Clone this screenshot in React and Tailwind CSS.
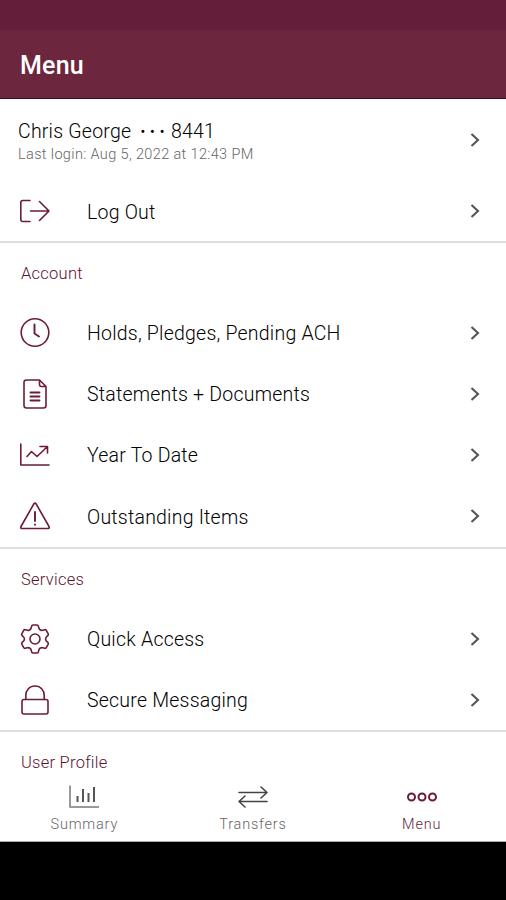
const MAROON = 'text-[#6b1d38]'

function Icon({ children, className = MAROON }) {
  return (
    <svg
      width="32"
      height="32"
      viewBox="0 0 32 32"
      fill="none"
      stroke="currentColor"
      strokeWidth="1.6"
      strokeLinecap="round"
      strokeLinejoin="round"
      className={`shrink-0 ${className}`}
    >
      {children}
    </svg>
  )
}

const LogOutIcon = () => (
  <Icon>
    <path d="M11 5.5H3.8Q1.8 5.5 1.8 7.5V24.5Q1.8 26.5 3.8 26.5H11" />
    <path d="M11.5 16H30M20.5 6.5L30 16L20.5 25.5" />
  </Icon>
)

const ClockIcon = () => (
  <Icon>
    <circle cx="16" cy="15.5" r="13.8" />
    <path d="M15.5 7.5V16.5L20 19.5" strokeWidth="1.9" />
  </Icon>
)

const DocumentIcon = () => (
  <Icon>
    <path d="M20.5 2H7.5Q5 2 5 4.5V27.5Q5 30 7.5 30H24.5Q27 30 27 27.5V8.5L20.5 2V6.5Q20.5 8.5 22.5 8.5H27" />
    <path d="M11.5 14.5H20.5M11.5 18.5H20.5M11.5 22.5H20.5" strokeWidth="1.9" />
  </Icon>
)

const TrendIcon = () => (
  <Icon>
    <path d="M1.8 5V26H30" />
    <path d="M8 17.5L12.5 12.5L18 17.5L28 8M21 7.5H28.5V14" />
  </Icon>
)

const WarningIcon = () => (
  <Icon>
    <path d="M14.8 4Q16 2.2 17.2 4L30 26.5Q30.8 28.5 28.8 28.5H3.2Q1.2 28.5 2 26.5Z" />
    <path d="M16 12V21M16 24.5V24.7" strokeWidth="1.9" />
  </Icon>
)

const GearIcon = () => (
  <Icon>
    <path d="M14 2H18Q19 2 19.3 3L20 5.4Q20.4 6.4 21.5 7Q22.6 7.6 23.7 7.3L25.8 6.7Q26.8 6.5 27.3 7.4L29.2 10.8Q29.7 11.7 29 12.4L27.4 14Q26.6 14.8 26.6 16Q26.6 17.2 27.4 18L29 19.6Q29.7 20.3 29.2 21.2L27.3 24.6Q26.8 25.5 25.8 25.3L23.7 24.7Q22.6 24.4 21.5 25Q20.4 25.6 20 26.6L19.3 29Q19 30 18 30H14Q13 30 12.7 29L12 26.6Q11.6 25.6 10.5 25Q9.4 24.4 8.3 24.7L6.2 25.3Q5.2 25.5 4.7 24.6L2.8 21.2Q2.3 20.3 3 19.6L4.6 18Q5.4 17.2 5.4 16Q5.4 14.8 4.6 14L3 12.4Q2.3 11.7 2.8 10.8L4.7 7.4Q5.2 6.5 6.2 6.7L8.3 7.3Q9.4 7.6 10.5 7Q11.6 6.4 12 5.4L12.7 3Q13 2 14 2Z" />
    <circle cx="16" cy="16" r="5" />
  </Icon>
)

const LockIcon = () => (
  <Icon>
    <path d="M6.8 15.5V11.5C6.8 6 10.5 2 16 2S25.2 6 25.2 11.5V15.5" />
    <rect x="3" y="15.5" width="26" height="14.5" rx="2" />
  </Icon>
)

const SummaryIcon = () => (
  <Icon className="text-[#555]">
    <path d="M2 4.5V26H31" stroke="#999" strokeWidth="2" strokeLinecap="butt" />
    <path d="M9.5 15V21M15 8V21M20.5 12V21M26 6V21" strokeWidth="2" strokeLinecap="butt" />
  </Icon>
)

const TransfersIcon = () => (
  <Icon className="text-[#444]">
    <path d="M2 11.5H30M24 6L30 11.5L24 17" />
    <path d="M30 20.5H2M8 15L2 20.5L8 26" />
  </Icon>
)

const DotsIcon = () => (
  <Icon>
    <circle cx="5.5" cy="16" r="3.5" strokeWidth="2" />
    <circle cx="16" cy="16" r="3.5" strokeWidth="2" />
    <circle cx="26.5" cy="16" r="3.5" strokeWidth="2" />
  </Icon>
)

function Chevron() {
  return (
    <svg width="10" height="16" viewBox="0 0 10 16" fill="none" stroke="#555" strokeWidth="2.1" className="shrink-0">
      <path d="M1.5 2L8 8L1.5 14" />
    </svg>
  )
}

const SECTIONS = [
  {
    title: 'Account',
    items: [
      { icon: ClockIcon, label: 'Holds, Pledges, Pending ACH' },
      { icon: DocumentIcon, label: 'Statements + Documents' },
      { icon: TrendIcon, label: 'Year To Date' },
      { icon: WarningIcon, label: 'Outstanding Items', height: 'h-[62px]' },
    ],
  },
  {
    title: 'Services',
    items: [
      { icon: GearIcon, label: 'Quick Access' },
      { icon: LockIcon, label: 'Secure Messaging' },
    ],
  },
]

const TABS = [
  { icon: SummaryIcon, label: 'Summary', color: 'text-[#666]' },
  { icon: TransfersIcon, label: 'Transfers', color: 'text-[#666]' },
  { icon: DotsIcon, label: 'Menu', color: 'text-[#641e3a]' },
]

function MenuRow({ icon: RowIcon, label, height = 'h-[61px]' }) {
  return (
    <div className={`flex items-center pl-[19px] pr-[26px] ${height}`}>
      <RowIcon />
      <span className="ml-9 flex-1 pt-[3px] text-[19.5px] font-light tracking-[0.22px] text-black">{label}</span>
      <Chevron />
    </div>
  )
}

function SectionTitle({ children }) {
  return (
    <div className="flex h-[59px] items-center pl-[21px] pt-[3px] text-[16.5px] font-light tracking-[0.25px] text-[#5a1230]">
      {children}
    </div>
  )
}

export default function App() {
  return (
    <div className="flex h-[900px] w-[506px] flex-col overflow-hidden bg-white font-['Roboto',sans-serif]">
      {/* Status bar + header */}
      <div className="h-[30px] shrink-0 bg-[#641e3a]" />
      <header className="flex h-[69px] shrink-0 items-center border-b border-[#4a0a1c] bg-[#6c263e] pl-5 pt-1">
        <h1 className="text-[25px] font-medium tracking-[0.2px] text-white">Menu</h1>
      </header>

      <main className="min-h-0 flex-1 overflow-hidden">
        <div className="border-b-2 border-[#dedede]">
          <div className="flex h-[82px] items-center pl-[18px] pr-[26px]">
            <div className="flex-1 pt-1.5">
              <p className="flex items-center text-[19.5px] font-light leading-6 tracking-[0.22px] text-black">
                Chris George
                <span className="ml-[9px] mr-0.5 text-[16px] tracking-[4.4px]">•••</span>
                8441
              </p>
              <p className="text-[14.5px] font-light leading-[22px] tracking-[0.36px] text-[#666]">
                Last login: Aug 5, 2022 at 12:43 PM
              </p>
            </div>
            <Chevron />
          </div>
          <MenuRow icon={LogOutIcon} label="Log Out" height="h-[60px]" />
        </div>

        {SECTIONS.map(({ title, items }) => (
          <section key={title} className="border-b-2 border-[#dedede]">
            <SectionTitle>{title}</SectionTitle>
            {items.map((item) => (
              <MenuRow key={item.label} {...item} />
            ))}
          </section>
        ))}
        <SectionTitle>User Profile</SectionTitle>
      </main>

      {/* Bottom tabs */}
      <nav className="grid h-[67px] shrink-0 grid-cols-3 border-b border-[#aaa] bg-white">
        {TABS.map(({ icon: TabIcon, label, color }) => (
          <div key={label} className="flex flex-col items-center pt-1.5">
            <TabIcon />
            <span className={`mt-0.5 text-[14.5px] font-light leading-5 tracking-[0.8px] ${color}`}>{label}</span>
          </div>
        ))}
      </nav>
      <div className="h-[58px] shrink-0 bg-black" />
    </div>
  )
}
